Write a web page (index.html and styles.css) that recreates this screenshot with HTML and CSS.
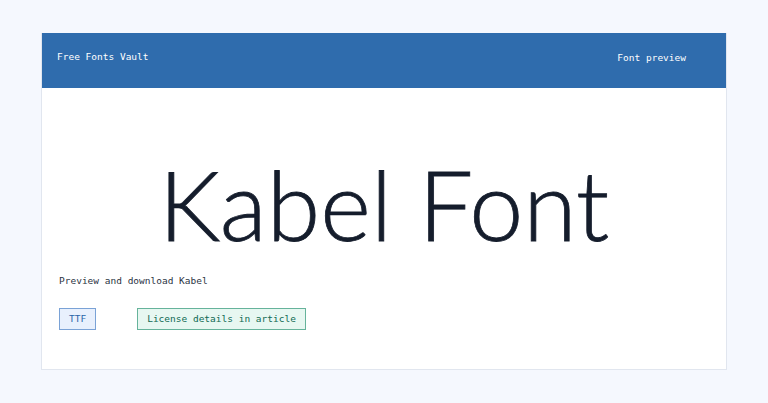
FILE: index.html
```html
<!DOCTYPE html>
<html lang="en">
<head>
  <meta charset="UTF-8">
  <meta name="viewport" content="width=device-width, initial-scale=1.0">
  <title>Kabel Font - Free Fonts Vault</title>
  <link rel="stylesheet" href="styles.css">
</head>
<body>
  <div class="card">
    <header class="topbar">
      <span class="brand">Free Fonts Vault</span>
      <span class="nav">Font preview</span>
    </header>
    <main class="content">
      <h1 class="sample">Kabel Font</h1>
      <p class="lead">Preview and download Kabel</p>
      <div class="tags">
        <span class="tag tag-format">TTF</span>
        <span class="tag tag-license">License details in article</span>
      </div>
    </main>
  </div>
</body>
</html>
```

FILE: styles.css
```css
body {
  margin: 0;
  background-color: #f5f8fe;
  font-family: "DejaVu Sans Mono", "Liberation Mono", monospace;
  font-size: 9.5px;
  line-height: 12px;
}
.card {
  width: 684px;
  height: 336px;
  margin: 33px 0 0 41px;
  background-color: white;
  border: 1px solid #e1e6ef;
  border-top: none;
}
.topbar {
  height: 55px;
  box-sizing: border-box;
  background-color: #2f6cad;
  color: white;
  display: flex;
  align-items: flex-start;
  justify-content: space-between;
  padding: 18px 40px 0 15px;
}
.nav {
  padding-top: 1px;
}
.content {
  padding: 0 17px;
}
.sample {
  margin: 0;
  padding-top: 72px;
  height: 88px;
  text-align: center;
  font-family: Lato, sans-serif;
  font-weight: 300;
  font-size: 97px;
  line-height: 88px;
  color: #151d2c;
  -webkit-text-stroke: 0.8px #151d2c;
}
.lead {
  margin: 27px 0 0;
  color: #2c3444;
}
.tags {
  display: flex;
  gap: 41px;
  margin-top: 21px;
}
.tag {
  height: 20px;
  line-height: 20px;
  padding: 0 9px;
}
.tag-format {
  background-color: #e8f0fd;
  border: 1px solid #7aa2d6;
  color: #2a64a8;
}
.tag-license {
  background-color: #e7f7f1;
  border: 1px solid #66b39b;
  color: #0f6a53;
}
```
